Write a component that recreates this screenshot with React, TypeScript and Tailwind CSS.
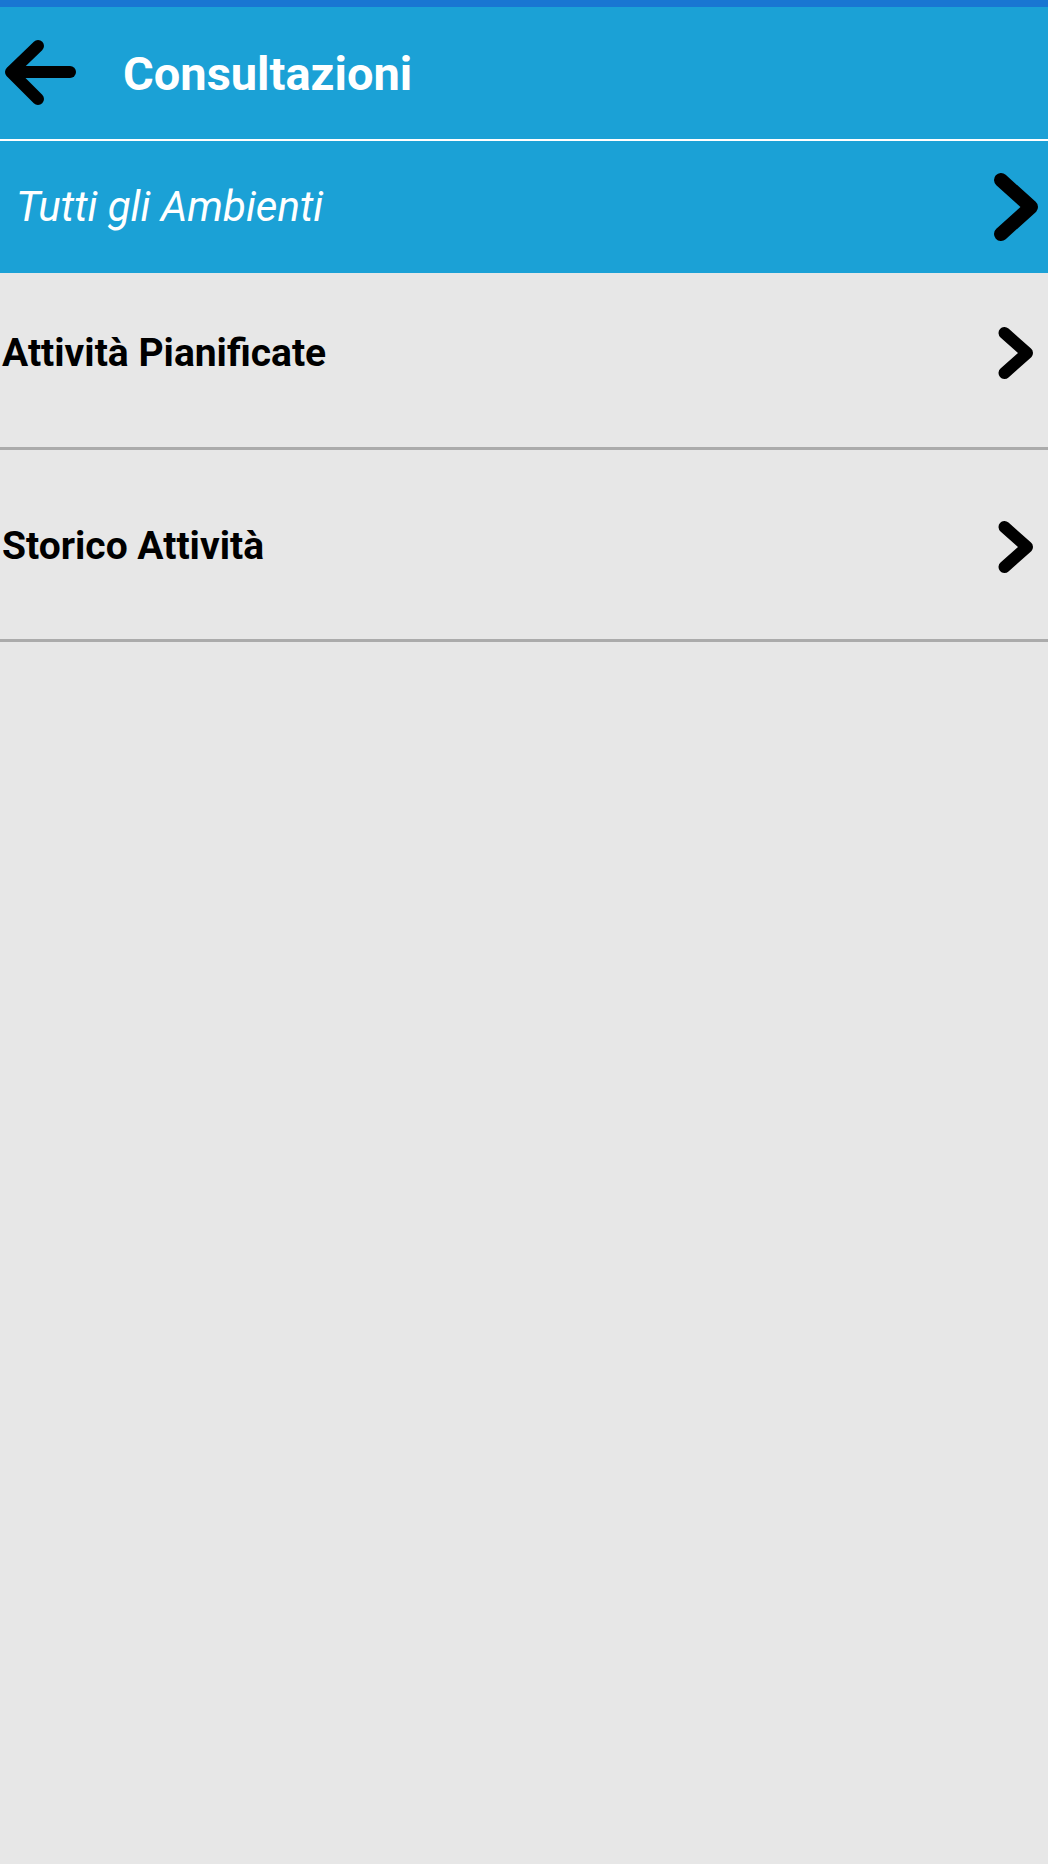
import React from 'react';

// freccia indietro dell'header
function BackArrow() {
  return (
    <svg width="80" height="72" viewBox="0 0 80 72" className="shrink-0">
      <g fill="none" stroke="#000" strokeWidth="12" strokeLinecap="round" strokeLinejoin="round">
        <path d="M68 35H10" />
        <path d="M36 9L9 35L36 62" />
      </g>
    </svg>
  );
}

// chevron destro, grosso per la barra ambienti
function Chevron({ big }: { big?: boolean }) {
  if (big) {
    return (
      <svg width="46" height="70" viewBox="0 0 46 70" className="shrink-0">
        <path d="M8 8L38 35L8 62" fill="none" stroke="#000" strokeWidth="14" strokeLinecap="round" strokeLinejoin="round" />
      </svg>
    );
  }
  return (
    <svg width="36" height="54" viewBox="0 0 36 54" className="shrink-0">
      <path d="M6.5 7L29 27L6.5 47" fill="none" stroke="#000" strokeWidth="12" strokeLinecap="round" strokeLinejoin="round" />
    </svg>
  );
}

const voci = [
  { label: 'Attività Pianificate', h: 'h-[177px] pb-[14px]' },
  { label: 'Storico Attività', h: 'h-[192px] pt-[4px]' },
];

export default function App() {
  return (
    <div className="w-full min-h-[1864px] bg-[#e7e7e7] font-['Roboto',sans-serif]">
      {/* barra di stato */}
      <div className="h-[7px] bg-[#1976d2]" />

      {/* header */}
      <div className="h-[132px] bg-[#1ba1d6] flex items-center">
        <div className="ml-[2px]">
          <BackArrow />
        </div>
        <h1 className="ml-[41px] text-[47px] font-bold text-white leading-none">Consultazioni</h1>
      </div>
      <div className="h-[2px] bg-white" />

      {/* selezione ambiente */}
      <div className="h-[132px] bg-[#1ba1d6] flex items-center justify-between pl-[16px] pr-[9px]">
        <span className="text-[42px] italic text-white leading-none">Tutti gli Ambienti</span>
        <Chevron big />
      </div>

      {/* voci di menu */}
      {voci.map((v) => (
        <div
          key={v.label}
          className={`${v.h} flex items-center justify-between pl-[2px] pr-[14px] border-b-[3px] border-[#ababab]`}
        >
          <span className="text-[39px] font-bold text-black leading-none">{v.label}</span>
          <Chevron />
        </div>
      ))}
    </div>
  );
}
